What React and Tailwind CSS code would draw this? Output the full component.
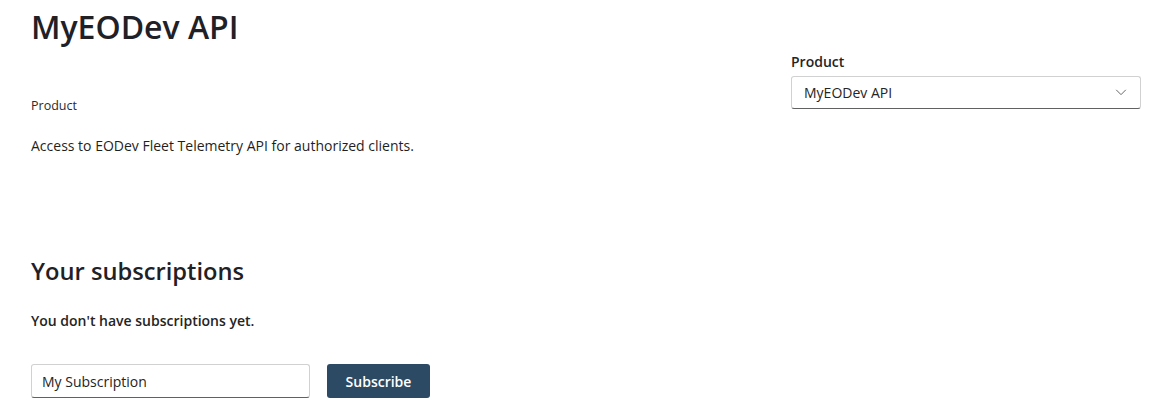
import React from "react";

export default function App() {
  return (
    <div className="w-[1166px] h-[409px] bg-white text-[#1f1f1f] overflow-hidden" style={{ fontFamily: '"Open Sans", "Noto Sans", sans-serif' }}>
      <div className="flex px-[31px]">
        <div className="flex-1">
          <h1 className="text-[32px] font-semibold leading-[44px] pt-[5px] text-[#1f2127]">MyEODev API</h1>
          <div className="text-[12.5px] leading-[16px] mt-[49px] text-[#2b2b2b]">Product</div>
          <p className="text-[14px] leading-[20px] mt-[22px] text-[#1f1f1f]">Access to EODev Fleet Telemetry API for authorized clients.</p>
          <h2 className="text-[23.7px] font-semibold leading-[32px] mt-[99px] text-[#1f2127]">Your subscriptions</h2>
          <p className="text-[14px] font-semibold leading-[20px] mt-[24px] text-[#242424]">You don't have subscriptions yet.</p>
          <div className="flex items-center gap-[17px] mt-[33px]">
            <input
              defaultValue="My Subscription"
              className="w-[279px] h-[34px] border border-[#d1d1d1] border-b-[#616161] rounded-[3px] px-[10px] text-[14px] text-[#242424] outline-none"
              style={{ fontFamily: '"Open Sans", sans-serif' }}
            />
            <button className="w-[103px] h-[34px] rounded-[3px] bg-[#2c4a64] text-white text-[14px] font-semibold">Subscribe</button>
          </div>
        </div>
        <div className="w-[350px] pt-[52px] mr-[-6px]">
          <div className="text-[14px] font-semibold leading-[20px] text-[#242424]">Product</div>
          <div className="mt-[4px] h-[33px] border border-[#d1d1d1] border-b-[#616161] rounded-[3px] flex items-center justify-between pl-[12px] pr-[12px] pb-[1px]">
            <span className="text-[14px] text-[#242424]">MyEODev API</span>
            <svg width="14" height="14" viewBox="0 0 16 16" fill="none" stroke="#616161" strokeWidth="1.1"><path d="M2.5 5.5 8 11l5.5-5.5" /></svg>
          </div>
        </div>
      </div>
    </div>
  );
}
